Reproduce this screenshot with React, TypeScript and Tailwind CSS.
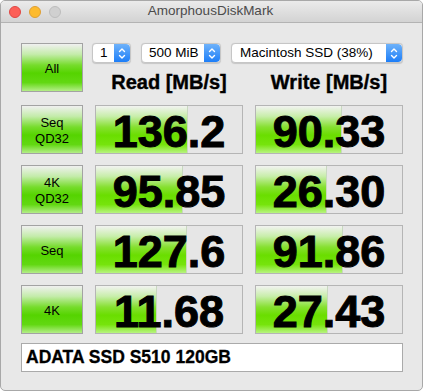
import { ReactNode } from "react";

type Result = {
  label: ReactNode;
  read: string;
  readFill: number;
  write: string;
  writeFill: number;
};

const results: Result[] = [
  { label: <>Seq<br />QD32</>, read: "136.2", readFill: 92, write: "90.33", writeFill: 86 },
  { label: <>4K<br />QD32</>, read: "95.85", readFill: 87, write: "26.30", writeFill: 71 },
  { label: "Seq", read: "127.6", readFill: 91, write: "91.86", writeFill: 87 },
  { label: "4K", read: "11.68", readFill: 61, write: "27.43", writeFill: 72 },
];

const TestButton = ({ children }: { children: ReactNode }) => (
  <div className="w-[62px] h-[49px] shrink-0 border border-[#a3a3a3] bg-[linear-gradient(to_bottom,#f0f0f0_0%,#c4ecaa_22%,#76dc2c_45%,#55d400_62%,#62d812_82%,#b4ee88_100%)] flex items-center justify-center text-center text-[13px] leading-[16px] text-black pt-[2px]">
    <span>{children}</span>
  </div>
);

const ValueBox = ({ value, fill }: { value: string; fill: number }) => (
  <div className="relative w-[148px] h-[49px] shrink-0 border border-[#b5b5b5] bg-[#e6e6e6] flex items-center justify-center pt-[3px]">
    <div
      className="absolute left-0 top-0 bottom-0 border-r border-[#c8d8c0] bg-[linear-gradient(to_bottom,#f2f3f1_0%,#c8eeaa_22%,#86e030_45%,#6ade00_62%,#76e40c_82%,#b8f480_100%)]"
      style={{ width: fill }}
    />
    <span className="relative text-[45px] leading-none font-bold text-black [-webkit-text-stroke:1px_black]">
      {value}
    </span>
  </div>
);

const Chevrons = () => (
  <div className="w-[16px] h-full rounded-r-[4px] bg-[linear-gradient(to_bottom,#6eb2fa,#1d7ef8)] flex items-center justify-center">
    <svg width="8" height="13" viewBox="0 0 8 13" fill="none" stroke="white" strokeWidth="1.4" strokeLinecap="round" strokeLinejoin="round">
      <path d="M1.5 4.5 L4 2 L6.5 4.5" />
      <path d="M1.5 8.5 L4 11 L6.5 8.5" />
    </svg>
  </div>
);

const Popup = ({ text, width, pad }: { text: string; width: string; pad: string }) => (
  <div className={`${width} h-[20px] flex rounded-[4px] bg-white border border-[#c6c6c6] shadow-[0_0.5px_1px_rgba(0,0,0,0.15)] overflow-hidden`}>
    <div className={`flex-1 flex items-center ${pad} text-[13.5px] text-black`}>{text}</div>
    <Chevrons />
  </div>
);

export default function App() {
  return (
    <div className="w-[424px] h-[392px] bg-white font-['Liberation_Sans',Arial,sans-serif]">
      <div className="w-[423px] h-[391px] rounded-[5px] border border-[#a8a8a8] bg-[#e8e8e8] overflow-hidden flex flex-col">
        {/* title bar */}
        <div className="relative h-[22px] shrink-0 border-b border-[#b3b3b3] bg-[linear-gradient(to_bottom,#ebebeb,#d3d3d3)] flex items-center justify-center">
          <div className="absolute left-[8px] top-[5px] flex gap-[8px]">
            <span className="w-[12px] h-[12px] rounded-full bg-[#fc5f57] border border-[#df4744]" />
            <span className="w-[12px] h-[12px] rounded-full bg-[#fdbb2e] border border-[#de9f34]" />
            <span className="w-[12px] h-[12px] rounded-full bg-[#d0d0d0] border border-[#bdbdbd]" />
          </div>
          <span className="text-[13.5px] text-[#4b4b4b] -ml-[2px]">AmorphousDiskMark</span>
        </div>

        {/* content */}
        <div className="pl-[20px] pt-[20px] flex flex-col">
          <div className="flex">
            <TestButton>All</TestButton>
            <div className="ml-[9px] w-[311px] flex flex-col">
              <div className="flex gap-[10px]">
                <Popup text="1" width="w-[39px]" pad="pl-[7px]" />
                <Popup text="500 MiB" width="w-[80px]" pad="pl-[7px]" />
                <Popup text="Macintosh SSD (38%)" width="w-[172px]" pad="pl-[8px]" />
              </div>
              <div className="pl-[3px] mt-[7px] flex gap-[12px] text-[20px] leading-[24px] font-bold text-black [-webkit-text-stroke:0.4px_black]">
                <div className="w-[148px] text-center">Read [MB/s]</div>
                <div className="w-[148px] text-center">Write [MB/s]</div>
              </div>
            </div>
          </div>

          <div className="mt-[11px] flex flex-col gap-[11px]">
            {results.map((r, i) => (
              <div key={i} className="flex gap-[12px]">
                <TestButton>{r.label}</TestButton>
                <ValueBox value={r.read} fill={r.readFill} />
                <ValueBox value={r.write} fill={r.writeFill} />
              </div>
            ))}
          </div>

          <div className="mt-[9px] w-[382px] h-[29px] bg-white border border-[#aaaaaa] flex items-center pl-[4px] text-[17.5px] font-bold text-black [-webkit-text-stroke:0.3px_black]">
            ADATA SSD S510 120GB
          </div>
        </div>
      </div>
    </div>
  );
}
